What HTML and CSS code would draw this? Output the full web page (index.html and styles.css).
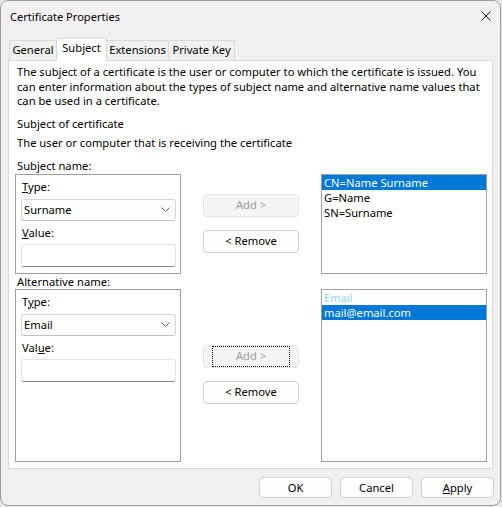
FILE: index.html
```html
<!DOCTYPE html>
<html>
<head>
<meta charset="utf-8">
<title>Certificate Properties</title>
<link rel="stylesheet" href="styles.css">
</head>
<body>
<div class="window">
  <div class="titlebar">
    <span class="title">Certificate Properties</span>
    <svg class="close" width="10" height="10" viewBox="0 0 10 10"><path d="M0.5 0.5 L9.5 9.5 M9.5 0.5 L0.5 9.5" stroke="#1a1a1a" stroke-width="1" fill="none"/></svg>
  </div>
  <div class="content">
    <div class="tabs">
      <div class="tab t-general">General</div>
      <div class="tab t-subject active">Subject</div>
      <div class="tab t-ext">Extensions</div>
      <div class="tab t-key">Private Key</div>
    </div>
    <div class="panel">
      <p class="intro">The subject of a certificate is the user or computer to which the certificate is issued. You<br>can enter information about the types of subject name and alternative name values that<br>can be used in a certificate.</p>
      <p class="line l-subject">Subject of certificate</p>
      <p class="line l-user">The user or computer that is receiving the certificate</p>

      <div class="caption c-first">Subject name:</div>
      <div class="row row-subject">
        <div class="group">
          <div class="glabel"><u>T</u>ype:</div>
          <div class="combo"><span>Surname</span><svg class="chev" width="9" height="5" viewBox="0 0 9 5"><path d="M0.5 0.5 L4.5 4.5 L8.5 0.5" stroke="#606060" stroke-width="1" fill="none"/></svg></div>
          <div class="glabel gl-value"><u>V</u>alue:</div>
          <div class="textbox"></div>
        </div>
        <div class="mid mid-subject">
          <div class="btn disabled">Add &gt;</div>
          <div class="btn">&lt; Remove</div>
        </div>
        <div class="list">
          <div class="item selected">CN=Name Surname</div>
          <div class="item">G=Name</div>
          <div class="item">SN=Surname</div>
        </div>
      </div>

      <div class="caption">Alternative name:</div>
      <div class="row row-alt">
        <div class="group">
          <div class="glabel">T<u>y</u>pe:</div>
          <div class="combo"><span>Email</span><svg class="chev" width="9" height="5" viewBox="0 0 9 5"><path d="M0.5 0.5 L4.5 4.5 L8.5 0.5" stroke="#606060" stroke-width="1" fill="none"/></svg></div>
          <div class="glabel gl-value">Val<u>u</u>e:</div>
          <div class="textbox"></div>
        </div>
        <div class="mid mid-alt">
          <div class="btn disabled focused"><span class="focusring">Add &gt;</span></div>
          <div class="btn">&lt; Remove</div>
        </div>
        <div class="list">
          <div class="item header">Email</div>
          <div class="item selected">mail@email.com</div>
        </div>
      </div>
    </div>
    <div class="footer">
      <div class="btn fbtn">OK</div>
      <div class="btn fbtn">Cancel</div>
      <div class="btn fbtn"><u>A</u>pply</div>
    </div>
  </div>
</div>
</body>
</html>
```

FILE: styles.css
```css
* { box-sizing: border-box; }
html, body { margin: 0; padding: 0; }
body {
  width: 502px;
  height: 507px;
  overflow: hidden;
  background: #e9e9ec;
  font-family: "Noto Sans", "Open Sans", sans-serif;
  font-size: 11.2px;
  color: #000;
}
.window {
  width: 501px;
  height: 506px;
  border: 1px solid #9c9c9c;
  border-radius: 8px;
  overflow: hidden;
  display: flex;
  flex-direction: column;
  background: #f0f0f0;
}
.titlebar {
  height: 30px;
  flex: none;
  background: #f3f0f4;
  display: flex;
  align-items: center;
  justify-content: space-between;
  padding: 0 9px 0 9px;
}
.title { font-size: 11.1px; line-height: 16px; padding-top: 1px; }
.close { display: block; margin-top: -1px; }

.content {
  flex: 1;
  padding: 7px 7px 0 7px;
  display: flex;
  flex-direction: column;
}
.tabs {
  height: 22px;
  display: flex;
  align-items: flex-end;
  padding-left: 1px;
}
.tab {
  height: 20px;
  line-height: 18px;
  text-align: center;
  border: 1px solid #d9d9d9;
  border-bottom: none;
  border-left: none;
  background: #f0f0f0;
}
.t-general { width: 48px; border-left: 1px solid #d9d9d9; }
.t-subject { width: 50px; }
.t-ext { width: 62px; }
.t-key { width: 66px; }
.tab.active {
  height: 23px;
  margin-bottom: -1px;
  background: #fff;
  position: relative;
  z-index: 1;
  line-height: 18px;
}
.panel {
  width: 485px;
  height: 409px;
  border: 1px solid #d9d9d9;
  background: #fff;
  padding: 0 0 0 6px;
}
.panel p { margin: 0; padding-left: 2px; line-height: 14.5px; }
.intro { padding-top: 4px; }
.l-subject { margin-top: 8px !important; }
.l-user { margin-top: 4.5px !important; }
.caption { line-height: 15px; height: 15px; padding-left: 2px; }
.c-first { margin-top: 7.5px; height: 16px; line-height: 16px; }

.row { display: flex; gap: 22px; }
.row-subject { height: 100px; }
.row-alt { height: 173px; }
.group {
  width: 166px;
  height: 100%;
  border: 1px solid #a0a0a0;
  padding: 4px 4px 0 5px;
}
.glabel { line-height: 15px; height: 15px; padding-left: 1px; }
.combo {
  margin-top: 5px;
  height: 22px;
  border: 1px solid #d6d6d6;
  border-bottom-color: #c2c2c2;
  border-radius: 3px;
  background: #fdfdfd;
  display: flex;
  align-items: center;
  justify-content: space-between;
  padding: 0 5px 0 2px;
}
.combo span { line-height: 16px; }
.chev { display: block; }
.gl-value { margin-top: 4px; }
.textbox {
  margin-top: 4px;
  height: 23px;
  border: 1px solid #e3e3e3;
  border-bottom: 1px solid #8a8a8a;
  border-radius: 3px;
  background: #fff;
}
.mid { width: 96px; display: flex; flex-direction: column; gap: 13px; }
.mid-subject { padding-top: 20px; }
.mid-alt { padding-top: 56px; }
.btn {
  height: 23px;
  border: 1px solid #d0d0d0;
  border-radius: 4px;
  background: #fdfdfd;
  display: flex;
  align-items: center;
  justify-content: center;
  line-height: 16px;
}
.btn.disabled { background: #f5f5f5; border-color: #e6e6e6; color: #9a9a9a; }
.focusring {
  display: flex;
  align-items: center;
  justify-content: center;
  width: 78px;
  height: 21px;
  border: 1px dotted #000;
}
.list {
  width: 166px;
  height: 100%;
  border: 1px solid #a0a0a0;
  background: #fff;
}
.item { height: 15px; line-height: 15px; padding-left: 2px; white-space: nowrap; }
.item.selected { background: #0078d7; color: #fff; }
.item.header { color: #8fd4f2; height: 15px; line-height: 15px; }
.footer {
  display: flex;
  justify-content: flex-end;
  gap: 8px;
  margin-top: 8px;
  padding-right: 0;
}
.fbtn { width: 73px; height: 21px; margin-right: 0; }
.footer .fbtn:last-child { margin-right: -1px; }
```
